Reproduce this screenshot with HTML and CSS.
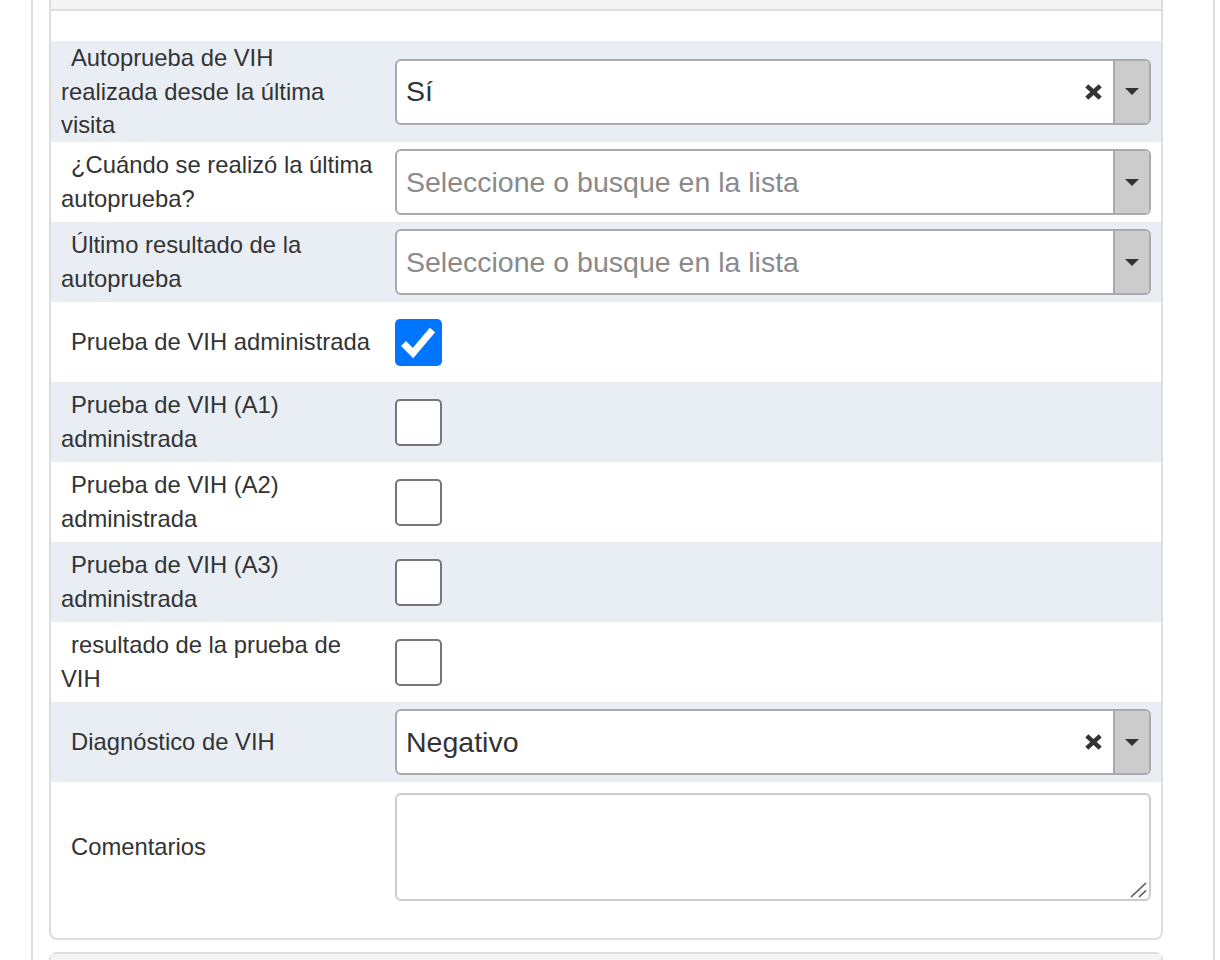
FILE: index.html
```html
<!DOCTYPE html>
<html lang="es">
<head>
<meta charset="utf-8">
<title>Formulario VIH</title>
<link rel="stylesheet" href="styles.css">
</head>
<body>
<div class="panel">
  <div class="card">
    <div class="card-header"></div>
    <div class="card-body">

      <div class="form-row alt">
        <label class="field-label">Autoprueba de VIH realizada desde la última visita</label>
        <div class="field-control">
          <div class="select">
            <span class="select-value">Sí</span>
            <span class="select-clear"><svg width="17" height="16" viewBox="0 0 17 16"><path d="M1.8 1.8 L15.2 14.2 M15.2 1.8 L1.8 14.2" stroke="#333" stroke-width="4.4" stroke-linecap="butt"/></svg></span>
            <span class="select-arrow"><svg width="14" height="7" viewBox="0 0 14 7"><path d="M0 0 H14 L7 7 Z" fill="#333"/></svg></span>
          </div>
        </div>
      </div>

      <div class="form-row">
        <label class="field-label">¿Cuándo se realizó la última autoprueba?</label>
        <div class="field-control">
          <div class="select">
            <span class="select-value placeholder">Seleccione o busque en la lista</span>
            <span class="select-arrow"><svg width="14" height="7" viewBox="0 0 14 7"><path d="M0 0 H14 L7 7 Z" fill="#333"/></svg></span>
          </div>
        </div>
      </div>

      <div class="form-row alt">
        <label class="field-label">Último resultado de la autoprueba</label>
        <div class="field-control">
          <div class="select">
            <span class="select-value placeholder">Seleccione o busque en la lista</span>
            <span class="select-arrow"><svg width="14" height="7" viewBox="0 0 14 7"><path d="M0 0 H14 L7 7 Z" fill="#333"/></svg></span>
          </div>
        </div>
      </div>

      <div class="form-row">
        <label class="field-label">Prueba de VIH administrada</label>
        <div class="field-control">
          <span class="checkbox checked"><svg width="47" height="47" viewBox="0 0 47 47"><path d="M8.5 24.5 L18 34 L37.5 11" fill="none" stroke="#fff" stroke-width="7" stroke-linejoin="miter" stroke-linecap="butt"/></svg></span>
        </div>
      </div>

      <div class="form-row alt">
        <label class="field-label">Prueba de VIH (A1) administrada</label>
        <div class="field-control"><span class="checkbox"></span></div>
      </div>

      <div class="form-row">
        <label class="field-label">Prueba de VIH (A2) administrada</label>
        <div class="field-control"><span class="checkbox"></span></div>
      </div>

      <div class="form-row alt">
        <label class="field-label">Prueba de VIH (A3) administrada</label>
        <div class="field-control"><span class="checkbox"></span></div>
      </div>

      <div class="form-row">
        <label class="field-label">resultado de la prueba de VIH</label>
        <div class="field-control"><span class="checkbox"></span></div>
      </div>

      <div class="form-row alt">
        <label class="field-label">Diagnóstico de VIH</label>
        <div class="field-control">
          <div class="select">
            <span class="select-value">Negativo</span>
            <span class="select-clear"><svg width="17" height="16" viewBox="0 0 17 16"><path d="M1.8 1.8 L15.2 14.2 M15.2 1.8 L1.8 14.2" stroke="#333" stroke-width="4.4" stroke-linecap="butt"/></svg></span>
            <span class="select-arrow"><svg width="14" height="7" viewBox="0 0 14 7"><path d="M0 0 H14 L7 7 Z" fill="#333"/></svg></span>
          </div>
        </div>
      </div>

      <div class="form-row textarea-row">
        <label class="field-label">Comentarios</label>
        <div class="field-control">
          <div class="textarea-wrap">
            <textarea class="textarea"></textarea>
            <svg class="resize-grip" width="18" height="16" viewBox="0 0 18 16"><path d="M1 15 L16 1 M9 15 L16 8.5" stroke="#555" stroke-width="1.6"/></svg>
          </div>
        </div>
      </div>

    </div>
  </div>
  <div class="card card-next">
    <div class="card-header"></div>
  </div>
</div>
</body>
</html>
```
FILE: styles.css
```css
html, body {
  margin: 0;
  padding: 0;
  background: #fff;
}

body {
  font-family: "Liberation Sans", Arial, sans-serif;
  color: #333;
  overflow: hidden;
}

.panel {
  margin-left: 31px;
  width: 1147px;
  min-height: 960px;
  border-left: 2px solid #ddd;
  border-right: 2px solid #ddd;
  padding: 0 17px 0 16px;
  box-sizing: content-box;
}

.card {
  border: 2px solid #ddd;
  border-top: none;
  border-radius: 0 0 8px 8px;
  background: #fff;
  width: 1110px;
}

.card-header {
  height: 9px;
  background: #f5f5f5;
  border-bottom: 2px solid #ddd;
}

.card-body {
  padding: 30px 0 26px;
}

.card-next {
  margin-top: 12px;
  border-top: 2px solid #ddd;
  border-radius: 8px 8px 0 0;
}

.card-next .card-header {
  height: 40px;
  border-bottom: none;
}

.form-row {
  display: grid;
  grid-template-columns: 324px 756px;
  column-gap: 10px;
  align-items: center;
  min-height: 80px;
  padding: 0 10px;
}

.form-row.alt {
  background: #e9eef5;
}

.field-label {
  font-size: 23.8px;
  line-height: 33.67px;
  text-indent: 10px;
  padding-right: 12px;
}

.field-control {
  display: flex;
  align-items: center;
}

.select {
  box-sizing: border-box;
  width: 756px;
  height: 66px;
  border: 2px solid #aaa;
  border-radius: 6px;
  background: #fff;
  display: flex;
  align-items: center;
  overflow: hidden;
}

.select-value {
  flex: 1;
  padding-left: 9px;
  font-size: 28.5px;
  color: #333;
  white-space: nowrap;
}

.select-value.placeholder {
  color: #8a8a8a;
}

.select-clear {
  display: flex;
  width: 17px;
  height: 16px;
  margin-right: 11px;
}

.select-arrow {
  align-self: stretch;
  width: 34px;
  background: #ccc;
  border-left: 2px solid #aaa;
  display: flex;
  align-items: center;
  justify-content: center;
}

.checkbox {
  box-sizing: border-box;
  display: block;
  width: 47px;
  height: 47px;
  border: 2px solid #767676;
  border-radius: 5px;
  background: #fff;
}

.checkbox.checked {
  border: none;
  background: #0075ff;
}

.checkbox svg {
  display: block;
}

.textarea-row {
  padding: 11px 10px;
}

.textarea-wrap {
  position: relative;
  width: 756px;
  height: 108px;
}

.textarea {
  box-sizing: border-box;
  display: block;
  width: 756px;
  height: 108px;
  border: 2px solid #ccc;
  border-radius: 6px;
  resize: none;
  margin: 0;
  font-family: inherit;
  font-size: 23.8px;
}

.resize-grip {
  position: absolute;
  right: 3px;
  bottom: 3px;
}
```
